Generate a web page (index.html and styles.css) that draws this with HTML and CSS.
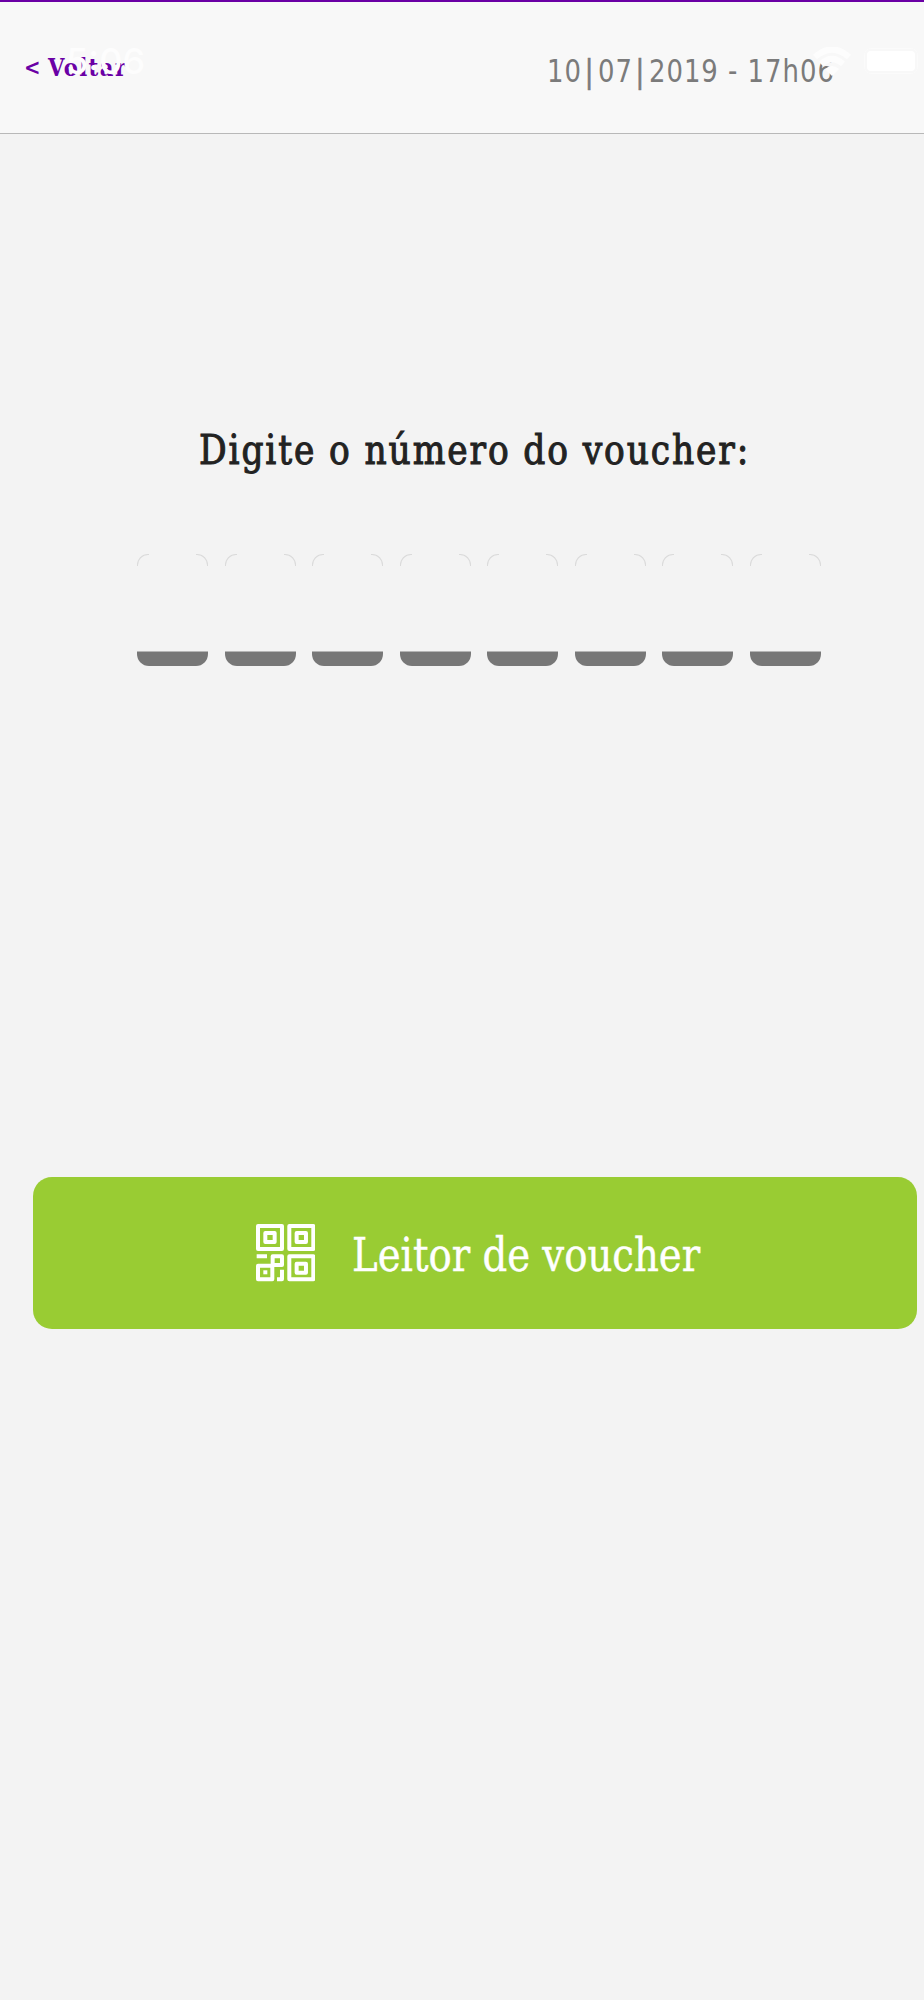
FILE: index.html
```
<!DOCTYPE html>
<html lang="pt-BR">

<head>
    <meta charset="UTF-8">
    <title>Voucher</title>
    <link rel="stylesheet" href="styles.css">
</head>

<body>
    <header class="header">
        <a class="back"><span class="arrow">&lt;</span><span class="label">Voltar</span></a>
        <span class="date">10<i>|</i>07<i>|</i>2019 - 17h06</span>
        <!-- status bar -->
        <div class="status">
            <span class="time">5:06</span>
            <svg class="wifi" viewBox="0 0 38 29">
                <path d="M2 10Q19 -5 36 10M8 17Q19 7 30 17" fill="none" stroke="#fdfdfd" stroke-width="6"/>
                <path d="M12 22Q19 16 26 22L19 29Z" fill="#fdfdfd"/>
            </svg>
            <div class="battery"><span></span></div>
        </div>
    </header>
    <main>
        <h1 class="title"><span>Digite o número do voucher:</span></h1>
        <div class="code">
            <div class="digit"></div>
            <div class="digit"></div>
            <div class="digit"></div>
            <div class="digit"></div>
            <div class="digit"></div>
            <div class="digit"></div>
            <div class="digit"></div>
            <div class="digit"></div>
        </div>
        <button class="reader">
            <svg class="qr" viewBox="0 0 178 172" fill="none" stroke="#fff" stroke-width="12" stroke-linejoin="round">
                <path d="M6 6h72v69H6zM100 6h72v69h-72zM100 97h72v69h-72zM6 125h43v41H6zM50 97h28v26H50z"/>
                <path d="M28 27h28v27H28zM122 27h28v27h-28zM122 119h28v27h-28z"/>
                <path d="M2 97h31M78 137v29H63"/>
                <path d="M22 139h12v12H22z" fill="#fff" stroke="none"/>
            </svg>
            <span class="text">Leitor de voucher</span>
        </button>
    </main>
</body>

</html>
```
FILE: styles.css
```
* {
    margin: 0;
    padding: 0;
    box-sizing: border-box;
}

body {
    min-height: 2000px;
    background: #f3f3f3;
    font-family: "DejaVu Serif Condensed", "DejaVu Serif", serif;
    font-stretch: condensed;
    overflow-x: hidden;
}

.header {
    position: relative;
    display: flex;
    height: 134px;
    background: #f8f8f8;
    border-top: 2px solid #6a00a5;
    border-bottom: 1px solid #b8b8b8;
    white-space: nowrap;
}

.back {
    display: flex;
    width: 547px;
    padding-left: 24px;
    line-height: 131px;
    font-size: 25px;
    font-weight: bold;
    color: #6a00a5;
}

.arrow {
    width: 24px;
    font-size: 22px;
}

.label,
.date,
.title span,
.text {
    display: inline-block;
    transform-origin: left center;
}

.label {
    letter-spacing: 1.5px;
    transform: scaleX(0.94);
}

.date {
    font-family: "DejaVu Sans Condensed", "DejaVu Sans", sans-serif;
    font-size: 32px;
    line-height: 138px;
    letter-spacing: 1.1px;
    color: #7b7b7b;
    transform: scaleX(0.9);
}

.date i {
    margin: 0 4px 0 3px;
    font-style: normal;
    -webkit-text-stroke: 0.6px #7b7b7b;
}

.status {
    position: absolute;
    left: 66px;
    right: 5px;
    top: 41px;
    height: 36px;
    display: flex;
    align-items: center;
}

.time {
    width: 747px;
    font: 500 36px/36px Inter, sans-serif;
    color: #fdfdfd;
}

.wifi {
    flex: none;
    width: 38px;
    height: 29px;
}

.battery {
    flex: none;
    width: 54px;
    height: 26px;
    margin-left: 13px;
    padding: 2px;
    border: 1px solid #fbfbfb;
    border-radius: 7px;
}

.battery span {
    display: block;
    height: 20px;
    border-radius: 4px;
    background: #fff;
}

.title {
    margin-top: 286px;
    padding-left: 199px;
    font-size: 41px;
    line-height: 60px;
    font-weight: normal;
    white-space: nowrap;
    color: #222;
}

.title span {
    letter-spacing: 2px;
    -webkit-text-stroke: 1px #222;
    transform: scaleX(0.935);
}

.code {
    display: flex;
    gap: 16.5px;
    margin: 73.5px 0 0 137px;
}

.digit {
    display: flex;
    justify-content: space-between;
    width: 71px;
    height: 112px;
    border-radius: 0 0 12px 12px;
    background: linear-gradient(transparent 97px, #777 98px);
}

/* only the rounded top corners are outlined */
.digit::before,
.digit::after {
    content: "";
    width: 11px;
    height: 11px;
    border-top: 1px solid #dadada;
}

.digit::before {
    border-left: 1px solid #dadada;
    border-top-left-radius: 11px;
}

.digit::after {
    border-right: 1px solid #dadada;
    border-top-right-radius: 11px;
}

.reader {
    display: flex;
    align-items: center;
    width: 884px;
    height: 152px;
    margin: 511.5px 0 0 33px;
    padding-left: 223px;
    border: 0;
    border-radius: 19px;
    background: #9c3;
    color: #fff;
    font: inherit;
    font-size: 46px;
    white-space: nowrap;
}

.qr {
    flex: none;
    width: 59.3px;
    height: 57.3px;
    margin-right: 37px;
}

.text {
    padding-top: 3px;
    line-height: 60px;
    -webkit-text-stroke: 0.4px #fff;
    transform: scaleX(0.934);
}
```
